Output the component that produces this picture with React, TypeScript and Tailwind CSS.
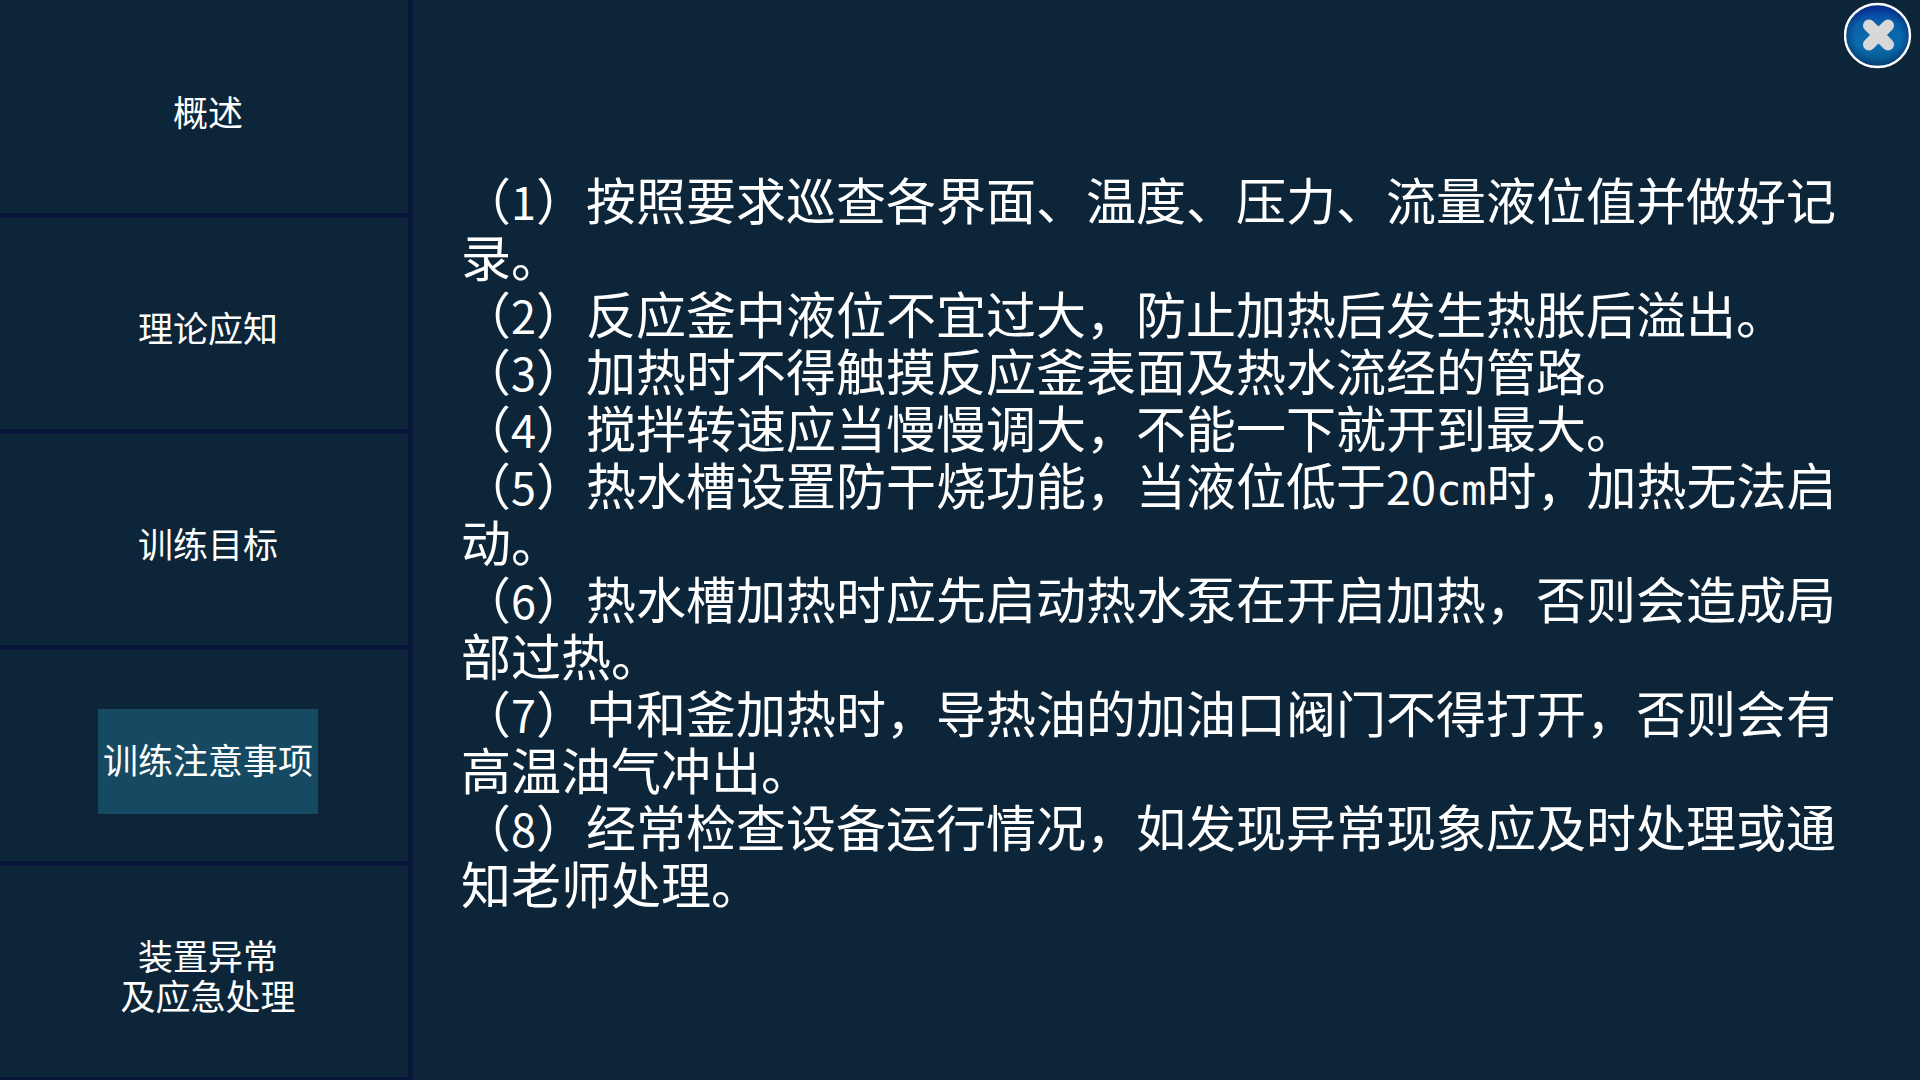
import clsx from "clsx";
import type { ReactNode } from "react";

const TABS = [
  { id: "overview", lines: ["概述"] },
  { id: "theory", lines: ["理论应知"] },
  { id: "goals", lines: ["训练目标"] },
  { id: "notes", lines: ["训练注意事项"] },
  { id: "emergency", lines: ["装置异常", "及应急处理"] },
];

const ACTIVE_TAB = "notes";

// Half-width digits, half an ideograph wide
function Num({ children }: { children: ReactNode }) {
  return <span className="font-['Noto_Sans_CJK_SC',sans-serif] text-[45px] leading-none">{children}</span>;
}

const NOTES: ReactNode[] = [
  "按照要求巡查各界面、温度、压力、流量液位值并做好记录。",
  "反应釜中液位不宜过大，防止加热后发生热胀后溢出。",
  "加热时不得触摸反应釜表面及热水流经的管路。",
  "搅拌转速应当慢慢调大，不能一下就开到最大。",
  <>
    热水槽设置防干烧功能，当液位低于<Num>20</Num>
    <span className="font-['DejaVu_Sans_Mono',monospace] text-[42px] leading-none">cm</span>时，加热无法启动。
  </>,
  "热水槽加热时应先启动热水泵在开启加热，否则会造成局部过热。",
  "中和釜加热时，导热油的加油口阀门不得打开，否则会有高温油气冲出。",
  "经常检查设备运行情况，如发现异常现象应及时处理或通知老师处理。",
];

function CloseIcon() {
  return (
    <svg viewBox="0 0 68 68" className="size-[68px]" aria-hidden>
      <defs>
        <linearGradient id="disc" x1="0" y1="0" x2="0" y2="1">
          <stop offset="0" stopColor="#0a2fa8" />
          <stop offset="0.3" stopColor="#0860a8" />
          <stop offset="0.65" stopColor="#0a6cae" />
          <stop offset="1" stopColor="#065488" />
        </linearGradient>
        <radialGradient id="rim">
          <stop offset="0.7" stopColor="#03205a" stopOpacity="0" />
          <stop offset="1" stopColor="#03205a" stopOpacity="0.5" />
        </radialGradient>
      </defs>
      <ellipse cx="33.5" cy="33.5" rx="32.5" ry="31.5" fill="url(#disc)" />
      <ellipse cx="33.5" cy="33.5" rx="32.5" ry="31.5" fill="url(#rim)" stroke="#ffffff" strokeWidth="2.4" />
      <path d="M25 23.500L44 42.500M44 23.500L25 42.500" stroke="#d8d8d8" strokeWidth="12" strokeLinecap="round" />
    </svg>
  );
}

export default function App() {
  return (
    <div className="flex h-screen overflow-hidden bg-[#0d2538] font-['Liberation_Sans','Noto_Sans_CJK_SC',sans-serif] text-white">
      <nav className="flex w-[413px] shrink-0 flex-col border-r-5 border-[#08153a] pt-0.5">
        {TABS.map((tab) => (
          <div
            key={tab.id}
            className="flex h-[20vh] shrink-0 items-center justify-center border-b-5 border-[#08153a] pt-3 pl-2"
          >
            <button
              type="button"
              className={clsx(
                "h-[105px] w-[220px] text-[35px] leading-[40px]",
                tab.id === ACTIVE_TAB && "bg-[#164a62]"
              )}
            >
              {tab.lines.map((line) => (
                <span key={line} className="block">
                  {line}
                </span>
              ))}
            </button>
          </div>
        ))}
      </nav>

      <main className="flex-1 pt-[175px] pr-[80px] pl-[48px]">
        {NOTES.map((note, i) => (
          <p key={i} className="text-[50px] leading-[57px]">
            （<Num>{i + 1}</Num>）{note}
          </p>
        ))}
      </main>

      <button type="button" aria-label="关闭" className="absolute top-0.5 right-2">
        <CloseIcon />
      </button>
    </div>
  );
}
